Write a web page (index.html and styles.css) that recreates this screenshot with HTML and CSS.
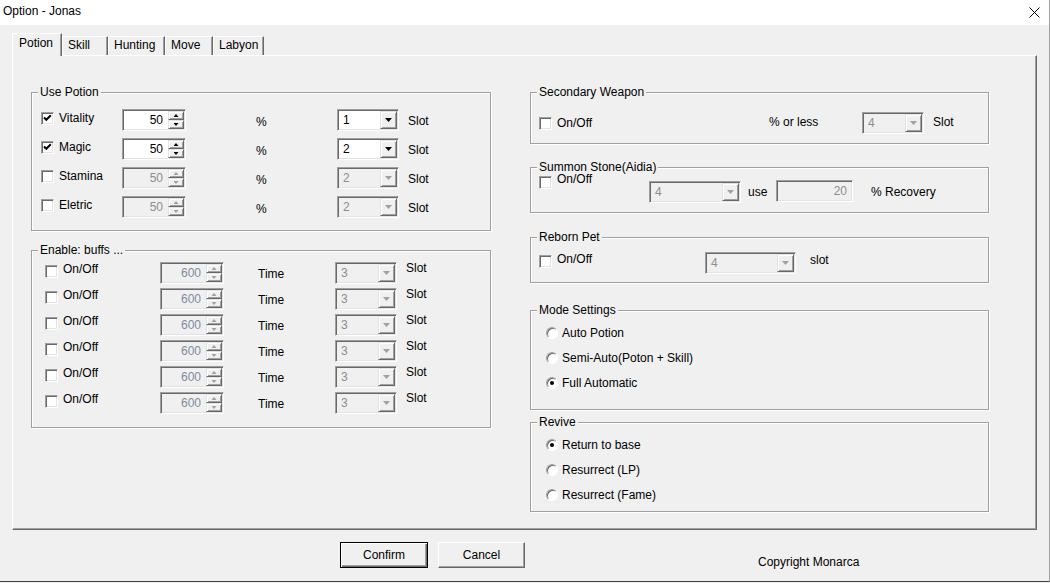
FILE: index.html
```html
<!DOCTYPE html>
<html lang="en">
<head>
  <meta charset="UTF-8" />
  <meta name="viewport" content="width=device-width, initial-scale=1.0"/>
  <title>Option - Jonas</title>
  <link rel="stylesheet" href="styles.css">
</head>
<body>

  <div class="window">
    <div class="titlebar">
      <span class="title">Option - Jonas</span>
      <svg class="close" width="11" height="11" viewBox="0 0 11 11">
        <path d="M0.5 0.5 L10.5 10.5 M10.5 0.5 L0.5 10.5" stroke="#000" stroke-width="1"/>
      </svg>
    </div>

    <div class="tabs">
      <div class="tab active tab-potion">Potion</div>
      <div class="tab tab-skill">Skill</div>
      <div class="tab tab-hunting">Hunting</div>
      <div class="tab tab-move">Move</div>
      <div class="tab tab-labyon">Labyon</div>
    </div>

    <div class="panel">
      <div class="col-left">

        <div class="group potion">
          <span class="group-title">Use Potion</span>

          <div class="row">
            <span class="check sunken"><svg viewBox="0 0 11 11"><path d="M2 4.5 L4.3 6.8 L8.8 2.3" /></svg></span>
            <span class="lbl">Vitality</span>
            <div class="spin sunken"><span class="spin-val">50</span><span class="spin-btns"><span class="spin-up raised"></span><span class="spin-down raised"></span></span></div>
            <span class="pct">%</span>
            <div class="combo sunken"><span class="combo-val">1</span><span class="combo-btn raised"></span></div>
            <span class="slot">Slot</span>
          </div>

          <div class="row">
            <span class="check sunken"><svg viewBox="0 0 11 11"><path d="M2 4.5 L4.3 6.8 L8.8 2.3" /></svg></span>
            <span class="lbl">Magic</span>
            <div class="spin sunken"><span class="spin-val">50</span><span class="spin-btns"><span class="spin-up raised"></span><span class="spin-down raised"></span></span></div>
            <span class="pct">%</span>
            <div class="combo sunken"><span class="combo-val">2</span><span class="combo-btn raised"></span></div>
            <span class="slot">Slot</span>
          </div>

          <div class="row">
            <span class="check sunken"></span>
            <span class="lbl">Stamina</span>
            <div class="spin sunken off"><span class="spin-val">50</span><span class="spin-btns"><span class="spin-up raised"></span><span class="spin-down raised"></span></span></div>
            <span class="pct">%</span>
            <div class="combo sunken off"><span class="combo-val">2</span><span class="combo-btn raised"></span></div>
            <span class="slot">Slot</span>
          </div>

          <div class="row">
            <span class="check sunken"></span>
            <span class="lbl">Eletric</span>
            <div class="spin sunken off"><span class="spin-val">50</span><span class="spin-btns"><span class="spin-up raised"></span><span class="spin-down raised"></span></span></div>
            <span class="pct">%</span>
            <div class="combo sunken off"><span class="combo-val">2</span><span class="combo-btn raised"></span></div>
            <span class="slot">Slot</span>
          </div>
        </div>

        <div class="group buffs">
          <span class="group-title">Enable: buffs ...</span>

          <div class="row">
            <span class="check sunken"></span>
            <span class="lbl">On/Off</span>
            <div class="spin sunken off"><span class="spin-val">600</span><span class="spin-btns"><span class="spin-up raised"></span><span class="spin-down raised"></span></span></div>
            <span class="time">Time</span>
            <div class="combo sunken off"><span class="combo-val">3</span><span class="combo-btn raised"></span></div>
            <span class="slot">Slot</span>
          </div>

          <div class="row">
            <span class="check sunken"></span>
            <span class="lbl">On/Off</span>
            <div class="spin sunken off"><span class="spin-val">600</span><span class="spin-btns"><span class="spin-up raised"></span><span class="spin-down raised"></span></span></div>
            <span class="time">Time</span>
            <div class="combo sunken off"><span class="combo-val">3</span><span class="combo-btn raised"></span></div>
            <span class="slot">Slot</span>
          </div>

          <div class="row">
            <span class="check sunken"></span>
            <span class="lbl">On/Off</span>
            <div class="spin sunken off"><span class="spin-val">600</span><span class="spin-btns"><span class="spin-up raised"></span><span class="spin-down raised"></span></span></div>
            <span class="time">Time</span>
            <div class="combo sunken off"><span class="combo-val">3</span><span class="combo-btn raised"></span></div>
            <span class="slot">Slot</span>
          </div>

          <div class="row">
            <span class="check sunken"></span>
            <span class="lbl">On/Off</span>
            <div class="spin sunken off"><span class="spin-val">600</span><span class="spin-btns"><span class="spin-up raised"></span><span class="spin-down raised"></span></span></div>
            <span class="time">Time</span>
            <div class="combo sunken off"><span class="combo-val">3</span><span class="combo-btn raised"></span></div>
            <span class="slot">Slot</span>
          </div>

          <div class="row">
            <span class="check sunken"></span>
            <span class="lbl">On/Off</span>
            <div class="spin sunken off"><span class="spin-val">600</span><span class="spin-btns"><span class="spin-up raised"></span><span class="spin-down raised"></span></span></div>
            <span class="time">Time</span>
            <div class="combo sunken off"><span class="combo-val">3</span><span class="combo-btn raised"></span></div>
            <span class="slot">Slot</span>
          </div>

          <div class="row">
            <span class="check sunken"></span>
            <span class="lbl">On/Off</span>
            <div class="spin sunken off"><span class="spin-val">600</span><span class="spin-btns"><span class="spin-up raised"></span><span class="spin-down raised"></span></span></div>
            <span class="time">Time</span>
            <div class="combo sunken off"><span class="combo-val">3</span><span class="combo-btn raised"></span></div>
            <span class="slot">Slot</span>
          </div>
        </div>

      </div>

      <div class="col-right">

        <div class="group weapon">
          <span class="group-title">Secondary Weapon</span>
          <div class="row">
            <span class="check sunken"></span>
            <span class="lbl">On/Off</span>
            <span class="less">% or less</span>
            <div class="combo sunken off"><span class="combo-val">4</span><span class="combo-btn raised"></span></div>
            <span class="slot">Slot</span>
          </div>
        </div>

        <div class="group stone">
          <span class="group-title">Summon Stone(Aidia)</span>
          <div class="row">
            <span class="check sunken"></span>
            <span class="lbl">On/Off</span>
            <div class="combo sunken off"><span class="combo-val">4</span><span class="combo-btn raised"></span></div>
            <span class="use">use</span>
            <div class="textbox sunken off">20</div>
            <span class="recovery">% Recovery</span>
          </div>
        </div>

        <div class="group pet">
          <span class="group-title">Reborn Pet</span>
          <div class="row">
            <span class="check sunken"></span>
            <span class="lbl">On/Off</span>
            <div class="combo sunken off"><span class="combo-val">4</span><span class="combo-btn raised"></span></div>
            <span class="slot">slot</span>
          </div>
        </div>

        <div class="group mode">
          <span class="group-title">Mode Settings</span>
          <div class="option"><span class="radio"></span>Auto Potion</div>
          <div class="option"><span class="radio"></span>Semi-Auto(Poton + Skill)</div>
          <div class="option"><span class="radio on"></span>Full Automatic</div>
        </div>

        <div class="group revive">
          <span class="group-title">Revive</span>
          <div class="option"><span class="radio on"></span>Return to base</div>
          <div class="option"><span class="radio"></span>Resurrect (LP)</div>
          <div class="option"><span class="radio"></span>Resurrect (Fame)</div>
        </div>

      </div>
    </div>

    <div class="footer">
      <button class="btn default">Confirm</button>
      <button class="btn">Cancel</button>
      <span class="copyright">Copyright Monarca</span>
    </div>
  </div>

</body>
</html>
```

FILE: styles.css
```css
* {
  box-sizing: border-box;
  font-family: "Liberation Sans", Arial, sans-serif;
}

body {
  margin: 0;
  background-color: #f0f0f0;
}

.window {
  width: 1050px;
  height: 582px;
  background: #f0f0f0;
  border-right: 1px solid #a0a0a0;
  border-bottom: 1px solid #404040;
  font-size: 12px;
  line-height: 14px;
  color: #000;
}

/* barra de titulo */
.titlebar {
  height: 25px;
  background: #fff;
  display: flex;
  justify-content: space-between;
}

.title {
  padding: 4px 0 0 3px;
}

.close {
  margin: 7px 9px 0 0;
}

/* abas */
.tabs {
  height: 30px;
  padding: 8px 0 0 12px;
  display: flex;
  align-items: flex-end;
}

.tab {
  height: 19px;
  padding: 1px 0 0 5px;
  background: #f0f0f0;
  border-top: 1px solid #fff;
  border-left: 1px solid #fff;
  border-right: 1px solid #696969;
  box-shadow: inset -1px 0 #a0a0a0;
}

.tab.active {
  height: 23px;
  margin-bottom: -1px;
  padding: 2px 0 0 6px;
  position: relative;
  z-index: 1;
}

.tab-potion { width: 50px; }
.tab-skill { width: 46px; }
.tab-hunting { width: 57px; }
.tab-move { width: 48px; }
.tab-labyon { width: 51px; }

.panel {
  width: 1025px;
  height: 475px;
  margin-left: 12px;
  padding: 36px 0 0 18px;
  border-top: 1px solid #fff;
  border-left: 1px solid #fff;
  border-right: 1px solid #696969;
  border-bottom: 1px solid #696969;
  box-shadow: inset -1px -1px #a0a0a0;
  display: flex;
  gap: 39px;
}

.col-left {
  width: 460px;
  display: flex;
  flex-direction: column;
}

.col-right {
  width: 459px;
  display: flex;
  flex-direction: column;
}

/* caixas de grupo */
.group {
  position: relative;
  border: 1px solid #a0a0a0;
  box-shadow: inset 1px 1px #fff, 1px 1px #fff;
}

.group-title {
  position: absolute;
  top: -8px;
  left: 6px;
  padding: 0 2px;
  background: #f0f0f0;
}

.row {
  display: grid;
  align-items: start;
}

/* controles */
.sunken {
  border: 1px solid;
  border-color: #a0a0a0 #fff #fff #a0a0a0;
  box-shadow: inset 1px 1px #696969, inset -1px -1px #e3e3e3;
}

.raised {
  background: #f0f0f0;
  border: 1px solid;
  border-color: #e3e3e3 #696969 #696969 #e3e3e3;
  box-shadow: inset 1px 1px #fff, inset -1px -1px #a0a0a0;
}

.check {
  display: block;
  width: 13px;
  height: 13px;
  background: #fff;
}

.check svg {
  display: block;
  width: 11px;
  height: 11px;
  fill: none;
  stroke: #000;
  stroke-width: 2;
}

.spin {
  width: 64px;
  height: 22px;
  background: #fff;
  display: flex;
}

.spin-val {
  flex: 1;
  text-align: right;
  padding-right: 4px;
  line-height: 20px;
}

.spin-btns {
  width: 16px;
  margin: 1px;
  display: flex;
  flex-direction: column;
}

.spin-up,
.spin-down {
  height: 9px;
  display: flex;
  align-items: center;
  justify-content: center;
}

.spin-up::after,
.spin-down::after {
  content: "";
  width: 5px;
  height: 3px;
  background: #000;
}

.spin-up::after {
  clip-path: polygon(50% 0, 100% 100%, 0 100%);
}

.spin-down::after {
  clip-path: polygon(0 0, 100% 0, 50% 100%);
}

.combo {
  width: 62px;
  height: 22px;
  background: #fff;
  display: flex;
}

.combo-val {
  flex: 1;
  padding-left: 5px;
  line-height: 20px;
}

.combo-btn {
  width: 17px;
  margin: 1px;
  display: flex;
  align-items: center;
  justify-content: center;
}

.combo-btn::after {
  content: "";
  width: 7px;
  height: 4px;
  background: #000;
  clip-path: polygon(0 0, 100% 0, 50% 100%);
}

.textbox {
  width: 77px;
  height: 22px;
  padding-right: 5px;
  text-align: right;
  line-height: 20px;
}

.off {
  background: #f0f0f0;
  color: #8d8d8d;
}

.off .spin-up::after,
.off .spin-down::after,
.off .combo-btn::after {
  background: #a0a0a0;
}

.buffs .spin-val {
  color: #7f8ba0;
}

.radio {
  position: relative;
  width: 12px;
  height: 12px;
  border-radius: 50%;
  border: 1px solid;
  border-color: #a0a0a0 #fff #fff #a0a0a0;
  box-shadow: inset 1px 1px #696969;
  background: #fff;
}

.radio.on::after {
  content: "";
  position: absolute;
  left: 3px;
  top: 3px;
  width: 4px;
  height: 4px;
  border-radius: 50%;
  background: #000;
}

.option {
  height: 14px;
  display: flex;
  align-items: center;
  gap: 4px;
}

.option + .option {
  margin-top: 11px;
}

/* Use Potion */
.potion {
  height: 139px;
  padding: 16px 0 0 9px;
  display: flex;
  flex-direction: column;
  gap: 7px;
}

.potion .row {
  height: 22px;
  grid-template-columns: 18px 63px 134px 81px 71px auto;
}

.potion .check { margin-top: 3px; }
.potion .lbl { margin-top: 2px; }
.potion .pct { margin-top: 6px; }
.potion .slot { margin-top: 5px; }

/* buffs */
.buffs {
  height: 178px;
  margin-top: 19px;
  padding: 11px 0 0 13px;
  display: flex;
  flex-direction: column;
  gap: 4px;
}

.buffs .row {
  height: 22px;
  grid-template-columns: 18px 97px 98px 77px 71px auto;
}

.buffs .check { margin-top: 3px; }
.buffs .time { margin-top: 5px; }
.buffs .slot { margin-top: -1px; }

/* lado direito */
.weapon {
  height: 52px;
  padding: 19px 0 0 8px;
}

.weapon .row {
  grid-template-columns: 18px 212px 93px 71px auto;
}

.weapon .check { margin-top: 5px; }
.weapon .lbl { margin-top: 4px; }
.weapon .less { margin-top: 3px; }
.weapon .slot { margin-top: 3px; }

.stone {
  height: 46px;
  margin-top: 23px;
  padding: 4px 0 0 8px;
}

.stone .row {
  grid-template-columns: 18px 92px 99px 28px 95px auto;
}

.stone .check { margin-top: 4px; }
.stone .combo { width: 92px; margin-top: 9px; }
.stone .use { margin-top: 13px; }
.stone .textbox { margin-top: 8px; }
.stone .recovery { margin-top: 13px; }

.pet {
  height: 46px;
  margin-top: 24px;
  padding: 14px 0 0 8px;
}

.pet .row {
  grid-template-columns: 18px 148px 105px auto;
}

.pet .check { margin-top: 3px; }
.pet .combo { width: 91px; }
.pet .slot { margin-top: 1px; }

.mode {
  height: 100px;
  margin-top: 27px;
  padding: 15px 0 0 15px;
}

.revive {
  height: 90px;
  margin-top: 12px;
  padding: 15px 0 0 15px;
}

/* rodape */
.footer {
  height: 51px;
  padding: 12px 0 0 340px;
  display: flex;
  align-items: flex-start;
}

.btn {
  width: 87px;
  height: 26px;
  padding: 0;
  margin: 0 0 0 10px;
  font-size: 12px;
  color: #000;
  background: #f0f0f0;
  border: 1px solid;
  border-color: #fff #696969 #696969 #fff;
  box-shadow: inset -1px -1px #a0a0a0;
}

.btn.default {
  width: 88px;
  margin: 0;
  border: 1px solid #000;
  box-shadow: inset 1px 1px #fff, inset -1px -1px #696969, inset -2px -2px #a0a0a0;
}

.copyright {
  margin: 13px 0 0 233px;
}
```
